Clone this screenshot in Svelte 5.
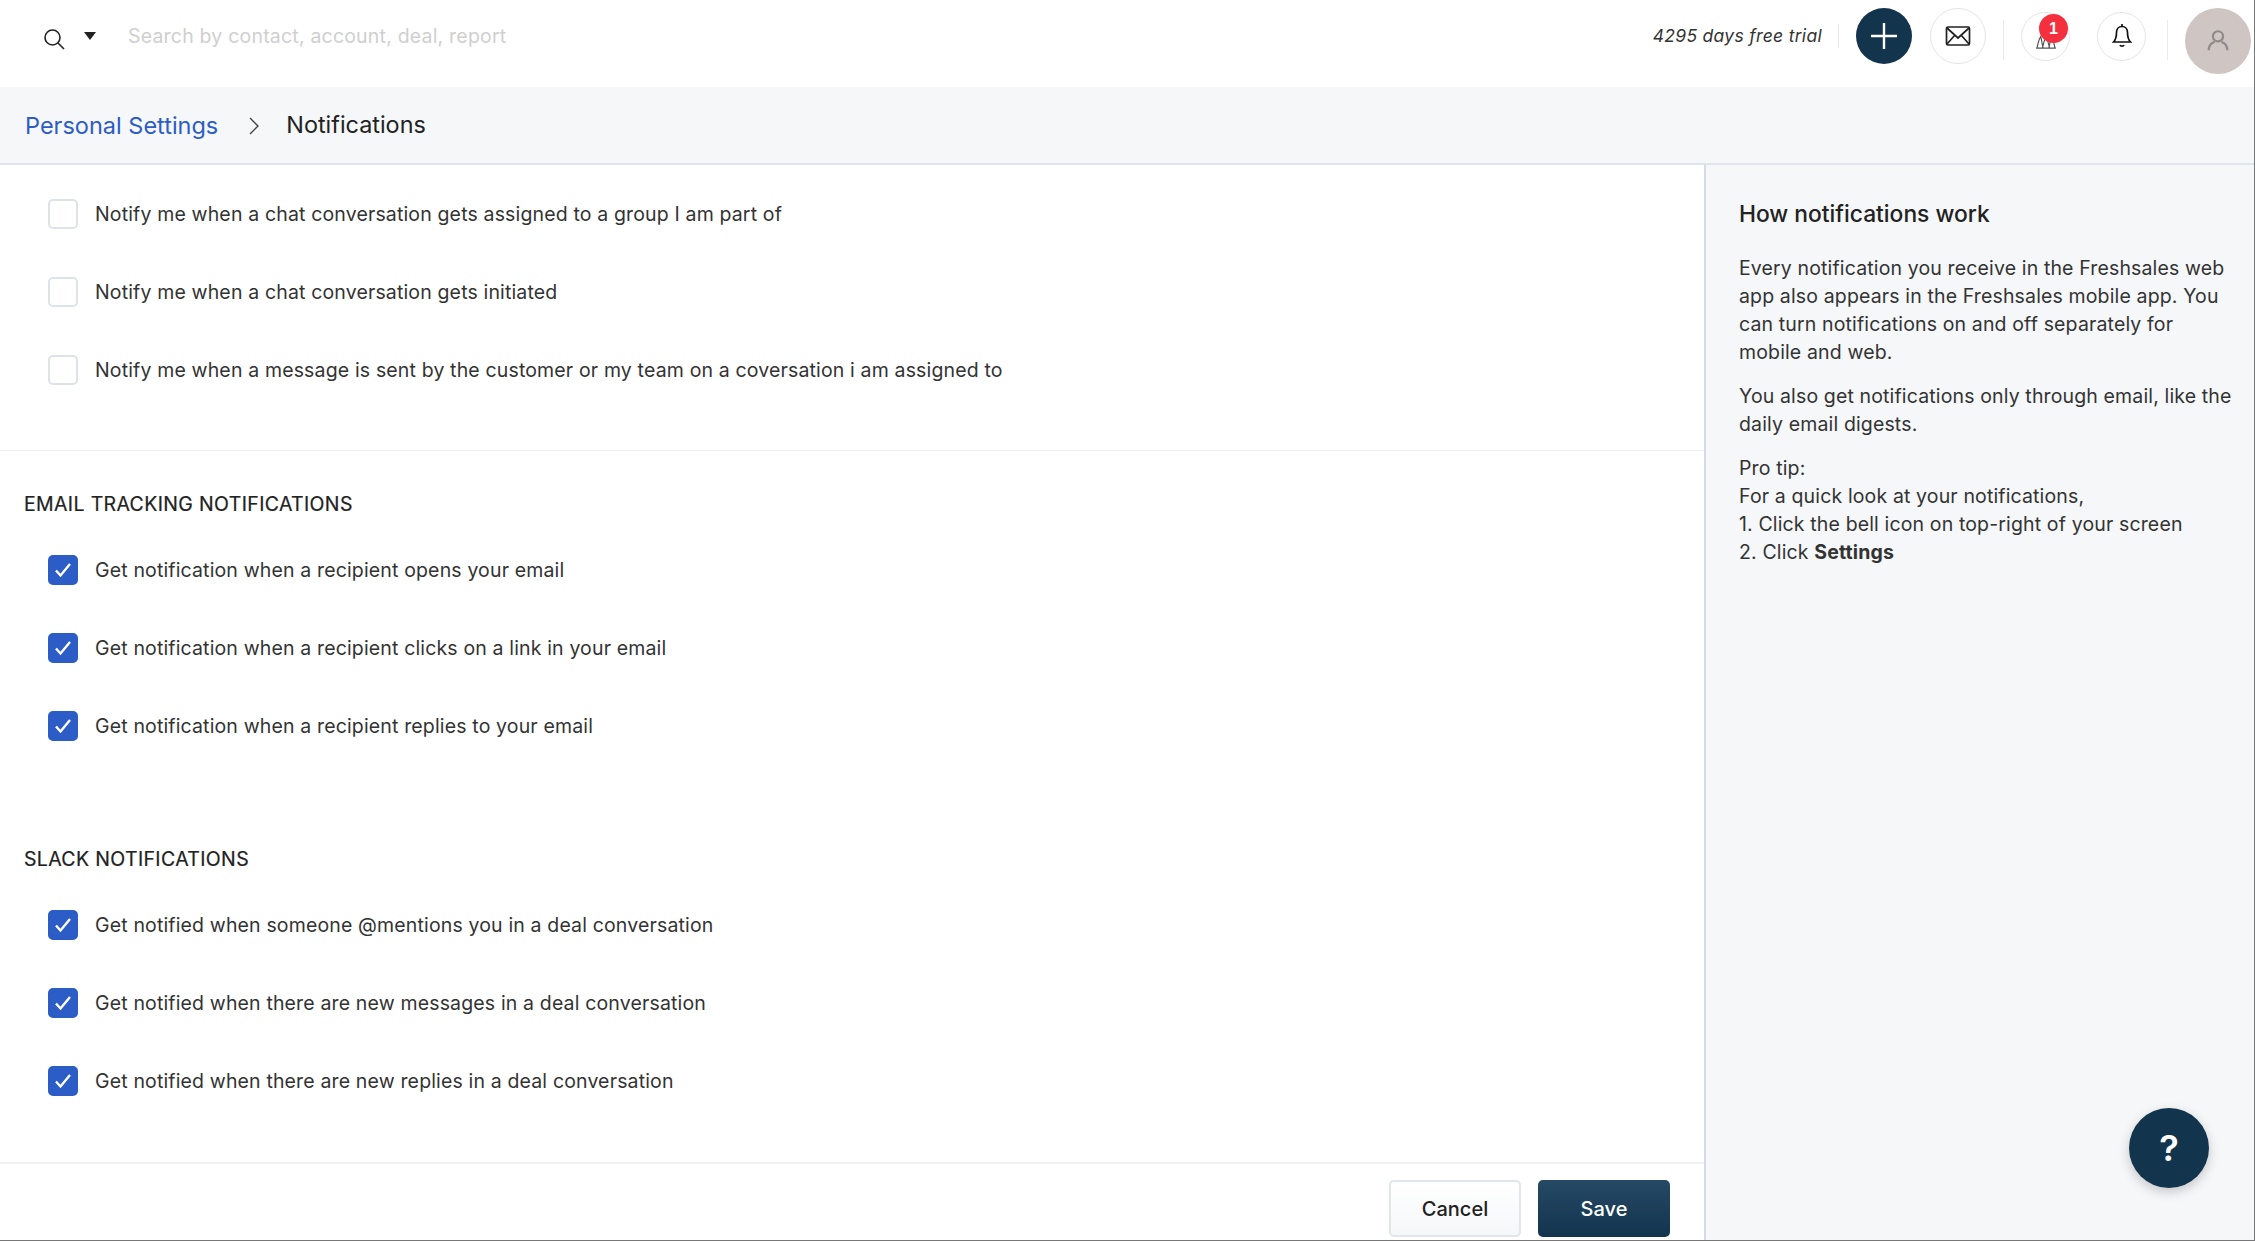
<script>
  const chatRows = [
    { label: "Notify me when a chat conversation gets assigned to a group I am part of", on: false },
    { label: "Notify me when a chat conversation gets initiated", on: false },
    { label: "Notify me when a message is sent by the customer or my team on a coversation i am assigned to", on: false },
  ];
  const emailRows = [
    { label: "Get notification when a recipient opens your email", on: true },
    { label: "Get notification when a recipient clicks on a link in your email", on: true },
    { label: "Get notification when a recipient replies to your email", on: true },
  ];
  const slackRows = [
    { label: "Get notified when someone @mentions you in a deal conversation", on: true },
    { label: "Get notified when there are new messages in a deal conversation", on: true },
    { label: "Get notified when there are new replies in a deal conversation", on: true },
  ];
</script>

{#snippet rows(list)}
  {#each list as row}
    <label class="row">
      <span class="check" class:check--on={row.on}>
        {#if row.on}
          <svg width="20" height="20" viewBox="0 0 20 20" fill="none" stroke="#fff" stroke-width="2.4">
            <path d="M3 10.500l4.500 5L17 4" />
          </svg>
        {/if}
      </span>
      <span>{row.label}</span>
    </label>
  {/each}
{/snippet}

<div class="page">
  <header class="topbar">
    <div class="search">
      <svg class="search__icon" width="24" height="24" viewBox="0 0 24 24" fill="none" stroke="#222" stroke-width="1.6">
        <circle cx="10.5" cy="10.5" r="7.5" />
        <path d="M16 16l6 6" />
      </svg>
      <span class="search__caret"></span>
      <span class="search__text">Search by contact, account, deal, report</span>
    </div>
    <div class="actions">
      <span class="trial">4295 days free trial</span>
      <span class="divider divider--short"></span>
      <button class="round round--add" aria-label="Add">
        <svg width="30" height="30" viewBox="0 0 30 30" stroke="#fff" stroke-width="2.4">
          <path d="M15 2v26M2 15h26" />
        </svg>
      </button>
      <button class="round round--mail" aria-label="Mail">
        <svg width="26" height="22" viewBox="0 0 26 22" fill="none" stroke="#222" stroke-width="1.7">
          <rect x="1.5" y="2" width="23" height="18" rx="1.5" />
          <path d="M2 3l11 10L24 3M2 19l8-9M24 19l-8-9" />
        </svg>
      </button>
      <span class="divider"></span>
      <button class="round round--small round--phone" aria-label="Updates">
        <svg width="22" height="18" viewBox="0 0 24 20" fill="none" stroke="#555" stroke-width="1.3">
          <path d="M2 18c1-4 1.500-9 4-13 1.500 4 1.500 9 3 13M8 18c1-4 2-9 4-13 2 4 3 9 4 13M15 18c1.500-4 1.500-9 3-13 2.500 4 3 9 4 13M1 18h22" />
        </svg>
        <span class="badge">1</span>
      </button>
      <button class="round round--small round--bell" aria-label="Notifications">
        <svg width="20" height="26" viewBox="0 0 20 26" fill="none" stroke="#111" stroke-width="1.7">
          <path d="M10 3.500c-3.500 0-5.500 2.500-5.500 6 0 5-1 7.500-3 9.500h17c-2-2-3-4.500-3-9.500 0-3.500-2-6-5.500-6z" />
          <path d="M10 1v2.500M8 22c.5 1.500 3.500 1.500 4 0" />
        </svg>
      </button>
      <span class="divider"></span>
      <div class="avatar">
        <svg width="22" height="24" viewBox="0 0 26 28" fill="none" stroke="#8f8a89" stroke-width="2.6">
          <circle cx="13" cy="8.500" r="6" />
          <path d="M2 25c0-6 4-9 7-10M24 25c0-6-4-9-7-10" />
        </svg>
      </div>
    </div>
  </header>

  <nav class="crumbs">
    <a class="crumbs__link" href="#settings">Personal Settings</a>
    <svg class="crumbs__sep" width="12" height="20" viewBox="0 0 12 20" fill="none" stroke="#444" stroke-width="1.4">
      <path d="M2 2l8 8-8 8" />
    </svg>
    <span class="crumbs__current">Notifications</span>
  </nav>

  <div class="main">
    <section class="form">
      <div class="form__body">
        <div class="group group--first">
          {@render rows(chatRows)}
        </div>
        <div class="group">
          <h3>EMAIL TRACKING NOTIFICATIONS</h3>
          {@render rows(emailRows)}
        </div>
        <div class="group group--last">
          <h3>SLACK NOTIFICATIONS</h3>
          {@render rows(slackRows)}
        </div>
      </div>
      <footer class="form__footer">
        <button class="btn">Cancel</button>
        <button class="btn btn--primary">Save</button>
      </footer>
    </section>

    <aside class="help">
      <h2>How notifications work</h2>
      <p>Every notification you receive in the Freshsales web app also appears in the Freshsales mobile app. You can turn notifications on and off separately for mobile and web.</p>
      <p>You also get notifications only through email, like the daily email digests.</p>
      <p>Pro tip:<br />For a quick look at your notifications,<br />1. Click the bell icon on top-right of your screen<br />2. Click <b>Settings</b></p>
      <button class="fab" aria-label="Help">?</button>
    </aside>
  </div>
</div>

<style>
  :global(body) {
    margin: 0;
    background: #fff;
  }

  .page {
    height: 1240px;
    width: 2254px;
    display: flex;
    flex-direction: column;
    overflow: hidden;
    font-family: Inter, "Liberation Sans", sans-serif;
    color: #333;
    border-right: 1px solid #777;
    border-bottom: 1px solid #777;
  }

  .topbar {
    height: 87px;
    flex: none;
    display: flex;
    align-items: center;
    justify-content: space-between;
    padding: 0 3px 0 42px;
    box-sizing: border-box;
  }

  .search {
    display: flex;
    align-items: center;
    margin-top: -15px;
  }

  .search__icon {
    margin-top: 5px;
  }

  .search__caret {
    width: 0;
    height: 0;
    margin-left: 18px;
    border-left: 6px solid transparent;
    border-right: 6px solid transparent;
    border-top: 8px solid #222;
  }

  .search__text {
    margin-left: 32px;
    font-size: 19.5px;
    letter-spacing: 0.2px;
    color: #cfcfcf;
  }

  .actions {
    display: flex;
    align-items: center;
  }

  .trial {
    font-size: 17.5px;
    letter-spacing: 0.3px;
    font-style: italic;
    color: #333;
    margin-right: 16px;
    margin-top: -16px;
  }

  .divider {
    width: 1px;
    height: 40px;
    background: #ebebeb;
    margin: -8px 17px 0;
  }

  .divider--short {
    height: 24px;
    margin: -16px 17px 0 0;
  }

  .round {
    position: relative;
    width: 56px;
    height: 56px;
    padding: 0;
    border-radius: 50%;
    border: 1px solid #e4e4e4;
    background: #fff;
    display: flex;
    align-items: center;
    justify-content: center;
    box-sizing: border-box;
    margin-top: -15px;
  }

  .round--add {
    background: #12344d;
    border: none;
    margin-right: 18px;
  }

  .round--small {
    width: 49px;
    height: 49px;
    margin-top: -15px;
  }

  .round--phone {
    margin-right: 27px;
  }

  .round--bell {
    margin-right: 4px;
  }

  .round--phone svg {
    margin-top: 10px;
  }

  .badge {
    position: absolute;
    top: 1px;
    right: 1px;
    width: 29px;
    height: 29px;
    border-radius: 50%;
    background: #f4303f;
    color: #fff;
    font-size: 16px;
    font-weight: 600;
    line-height: 29px;
    text-align: center;
  }

  .avatar {
    width: 66px;
    height: 66px;
    border-radius: 50%;
    background: #cfc5c3;
    display: flex;
    align-items: center;
    justify-content: center;
    margin-top: -5px;
  }

  .crumbs {
    height: 78px;
    flex: none;
    box-sizing: border-box;
    background: #f5f7f9;
    border-bottom: 2px solid #dfe5ea;
    display: flex;
    align-items: center;
    padding-left: 25px;
  }

  .crumbs__link {
    font-size: 23.5px;
    color: #2c5cc5;
    text-decoration: none;
    margin-top: 1px;
  }

  .crumbs__sep {
    margin: 2px 26px 0 30px;
  }

  .crumbs__current {
    font-size: 23.4px;
    color: #222;
    margin-top: -1px;
  }

  .main {
    flex: 1;
    display: flex;
    min-height: 0;
  }

  .form {
    width: 1704px;
    flex: none;
    display: flex;
    flex-direction: column;
  }

  .form__body {
    flex: 1;
    padding-top: 10px;
  }

  .group {
    padding-top: 41px;
    padding-left: 24px;
  }

  .group--first {
    padding-top: 0;
    padding-bottom: 41px;
    border-bottom: 1px solid #ebeff3;
  }

  .group--last {
    padding-top: 82px;
  }

  h3 {
    margin: 0 0 15px;
    font-size: 19.5px;
    font-weight: 400;
    letter-spacing: 0.35px;
    line-height: 24px;
    color: #222;
    -webkit-text-stroke: 0.2px #222;
  }

  .row {
    height: 78px;
    display: flex;
    align-items: center;
    gap: 17px;
    padding-left: 24px;
    font-size: 19.5px;
    letter-spacing: 0.15px;
    color: #333;
  }

  .check {
    width: 30px;
    height: 30px;
    flex: none;
    box-sizing: border-box;
    border: 2px solid #dde3e9;
    border-radius: 5px;
    background: #fff;
    display: flex;
    align-items: center;
    justify-content: center;
  }

  .check--on {
    background: #2c5cc5;
    border-color: #2c5cc5;
  }

  .form__footer {
    height: 78px;
    flex: none;
    box-sizing: border-box;
    border-top: 2px solid #f0f2f4;
    display: flex;
    justify-content: flex-end;
    align-items: flex-start;
    gap: 17px;
    padding: 16px 34px 0 0;
  }

  .btn {
    width: 132px;
    height: 57px;
    border-radius: 5px;
    border: 2px solid #e2e5e9;
    background: linear-gradient(#fff, #f5f7f9);
    font-family: inherit;
    font-size: 20px;
    font-weight: 500;
    color: #222;
  }

  .btn--primary {
    border: none;
    background: linear-gradient(#264966, #12344d);
    color: #fff;
  }

  .help {
    position: relative;
    flex: 1;
    background: #f5f7f9;
    border-left: 2px solid #d3dbe6;
    padding: 0 20px 0 33px;
    font-size: 19.5px;
    letter-spacing: 0.14px;
    line-height: 28.1px;
    color: #333;
  }

  .help h2 {
    margin: 35px 0 26px;
    font-size: 22.8px;
    line-height: 28px;
    font-weight: 500;
    letter-spacing: 0;
    color: #222;
  }

  .help p {
    margin: 0 0 15.500px;
  }

  .help b {
    font-weight: 700;
  }

  .fab {
    position: absolute;
    right: 45px;
    bottom: 52px;
    width: 80px;
    height: 80px;
    border: none;
    border-radius: 50%;
    background: #12344d;
    color: #fff;
    font-family: inherit;
    font-size: 36px;
    font-weight: 600;
    box-shadow: 0 4px 12px rgba(0, 0, 0, 0.2);
  }
</style>
